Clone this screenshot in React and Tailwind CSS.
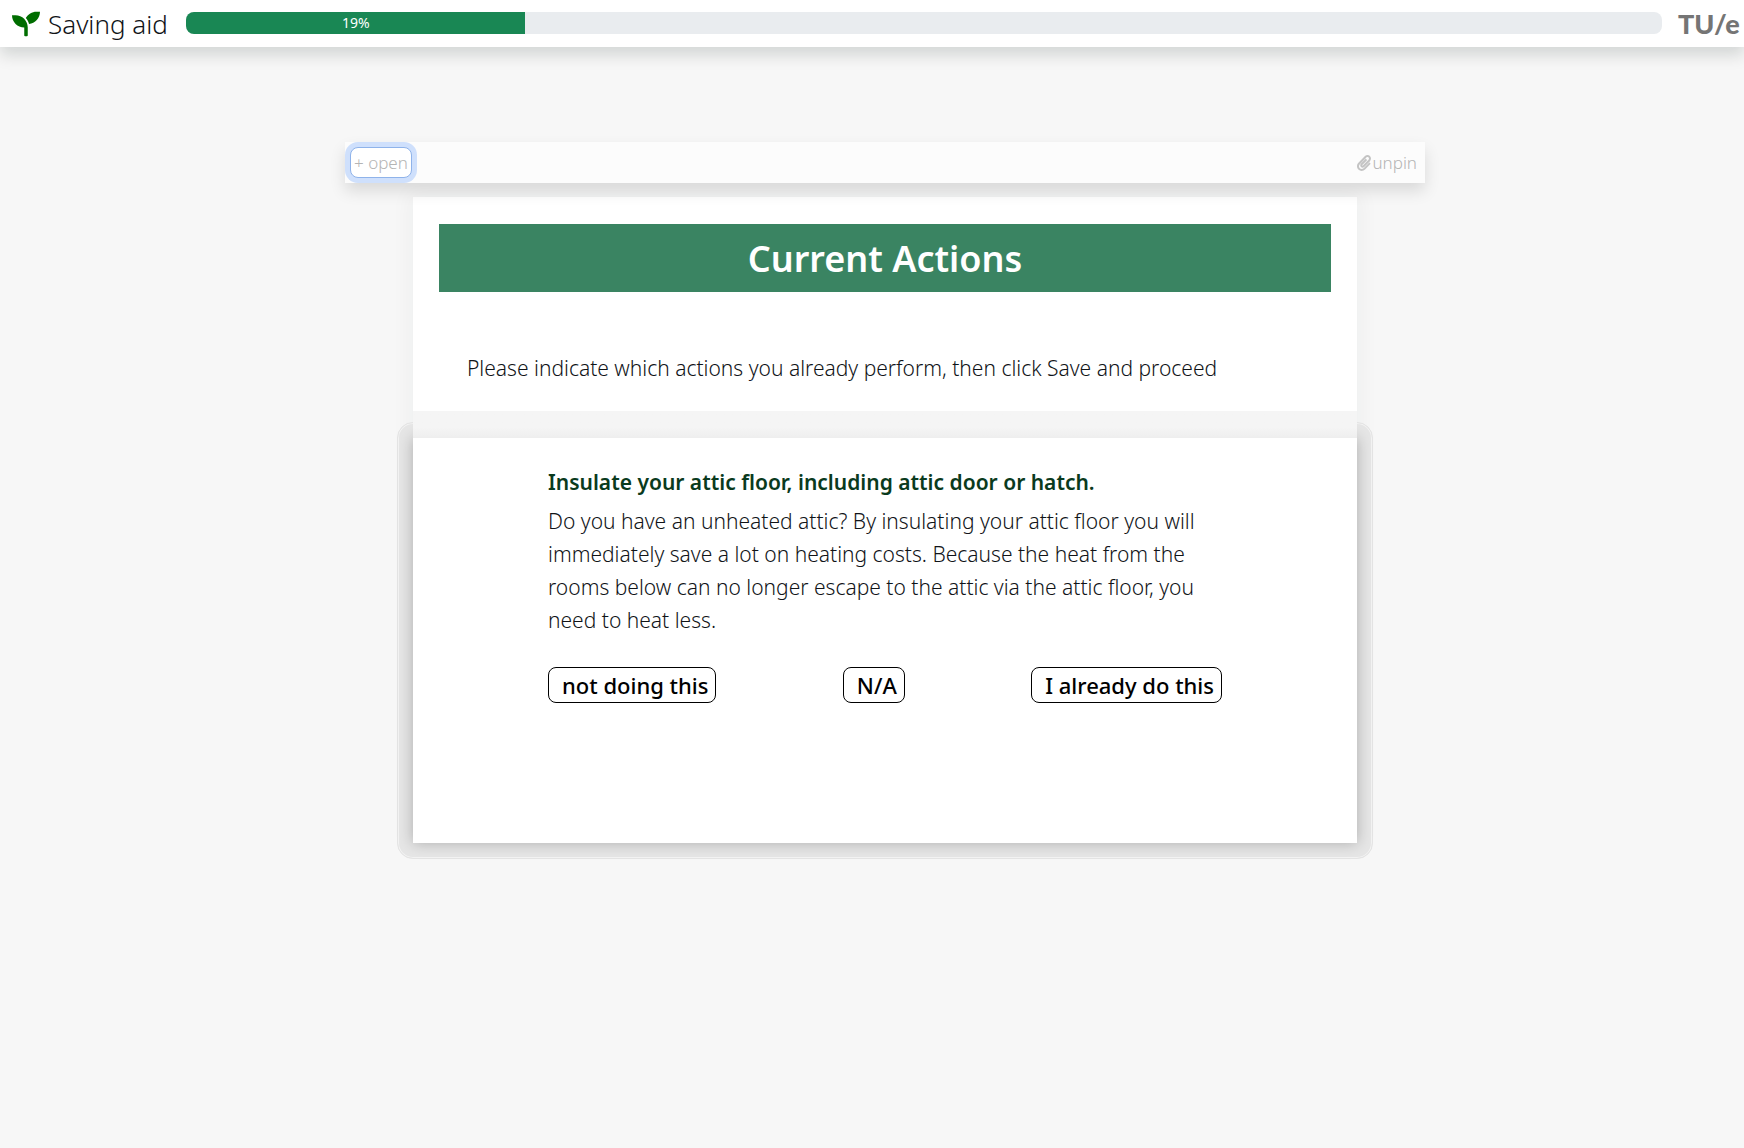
import React from "react";
import { FaSeedling, FaPaperclip } from "react-icons/fa";

const PROGRESS = { label: "19%", width: 23 };

function Header() {
  return (
    <header className="relative flex h-[47px] items-center bg-white pl-3 pr-1 shadow-[0_8px_16px_rgba(0,30,20,0.15)]">
      <a href="#home" className="flex w-[174px] shrink-0 items-center gap-2 text-[#111418]">
        <FaSeedling className="size-7 text-[#006d00]" aria-hidden="true" />
        <span className="whitespace-nowrap text-[26px] font-light leading-8">Saving aid</span>
      </a>
      <div
        role="progressbar"
        aria-label="Progress"
        aria-valuenow={19}
        aria-valuemin={0}
        aria-valuemax={100}
        className="mb-px flex h-[22px] min-w-0 grow overflow-hidden rounded-lg bg-[#e9ecef]"
      >
        <div
          className="flex items-center justify-center bg-[#198754] text-sm text-white"
          style={{ width: `${PROGRESS.width}%` }}
        >
          {PROGRESS.label}
        </div>
      </div>
      <span className="ml-4 w-[62px] shrink-0 whitespace-nowrap font-['Lato',sans-serif] text-[27px] font-black leading-8 text-[#757575]">
        TU/e
      </span>
    </header>
  );
}

function Toolbar() {
  return (
    <div className="relative z-10 flex h-[41px] items-center justify-between bg-[#fcfcfc] px-[5px] text-[17px] font-light text-[#b4b4b4] shadow-[0_8px_16px_rgba(0,0,0,0.12)]">
      <button className="h-[31px] rounded-lg border border-[#8fb3ea] bg-white px-[3px] leading-7 ring-[5px] ring-[#cfe0fc]">
        + open
      </button>
      <button className="flex items-center px-[3px]">
        <FaPaperclip className="size-4 text-[#c4c4c4]" aria-hidden="true" />
        unpin
      </button>
    </div>
  );
}

const CHOICES = ["not doing this", "N/A", "I already do this"];

export default function App() {
  return (
    <div className="min-h-screen bg-[#f7f7f7] font-['Noto_Sans',sans-serif] text-[#111418]">
      <Header />
      <main className="mx-auto w-full max-w-[1106px] pl-[26px] pt-[95px]">
        <Toolbar />
        <div className="relative mx-[68px] mt-3.5 shadow-[0_0_20px_4px_rgba(0,50,40,0.04)]">
          <section className="relative bg-white px-[26px] pb-[26px] pt-[27px]">
            <h1 className="bg-[#3a8462] pt-0.5 text-center text-[36px] font-semibold leading-[66px] text-white">
              Current Actions
            </h1>
            <p className="mt-[60px] pl-7 text-[21px] font-light leading-[33px]">
              Please indicate which actions you already perform, then click Save and proceed
            </p>
          </section>
          <div className="relative z-[1] h-[27px] bg-linear-to-b from-[#f5f5f5] from-60% to-[#eeeeee]" />
          <div className="relative">
            <div
              className="absolute -inset-4 rounded-2xl border border-[#e4e4e4] bg-[#e6e6e6] shadow-[inset_0_0_0_1px_#f3f3f3]"
              aria-hidden="true"
            />
            <section className="relative min-h-[405px] bg-white px-[135px] pt-7 shadow-[0_0_14px_rgba(0,0,0,0.25)]">
              <h2 className="text-[21px] font-semibold leading-[33px] text-[#0a3a1d]">
                Insulate your attic floor, including attic door or hatch.
              </h2>
              <p className="mt-[6px] text-[21px] font-light leading-[33px]">
                Do you have an unheated attic? By insulating your attic floor you will immediately save a
                lot on heating costs. Because the heat from the rooms below can no longer escape to the
                attic via the attic floor, you need to heat less.
              </p>
              <div className="mt-[30px] flex justify-between">
                {CHOICES.map((choice) => (
                  <button
                    key={choice}
                    className="h-9 rounded-lg border border-black pl-[13px] pr-[7px] text-[22px] font-medium leading-8 text-black"
                  >
                    {choice}
                  </button>
                ))}
              </div>
            </section>
          </div>
        </div>
      </main>
    </div>
  );
}
